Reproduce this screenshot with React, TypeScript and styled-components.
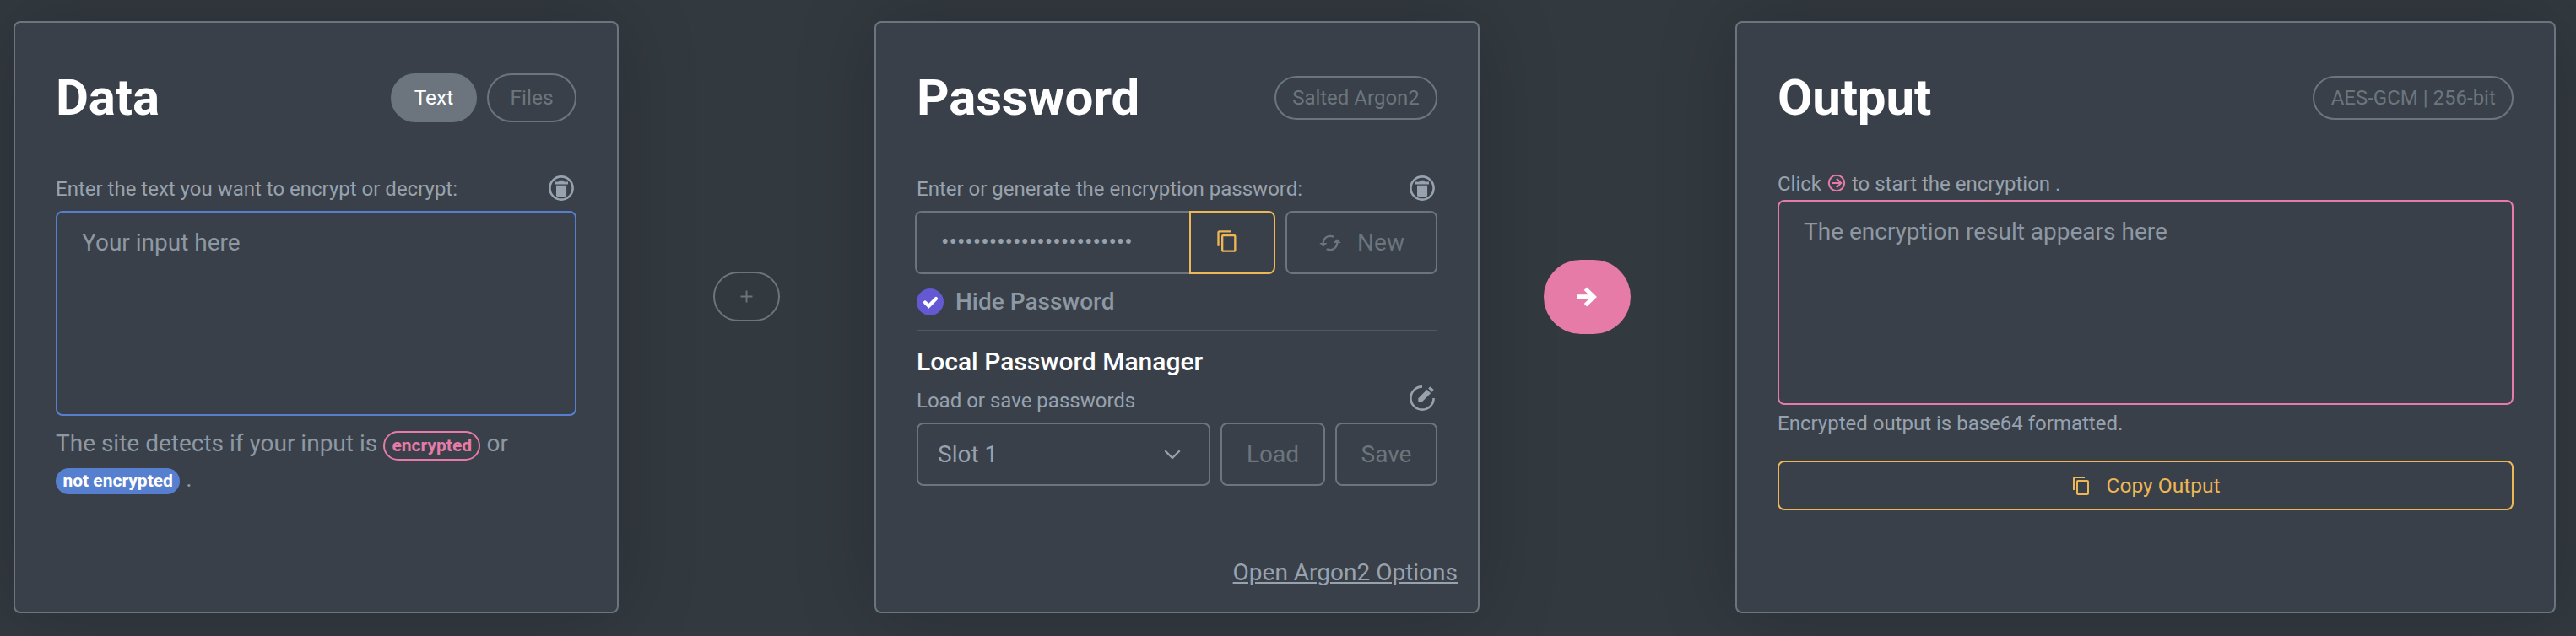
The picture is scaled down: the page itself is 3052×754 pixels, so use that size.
import React from "react";
import styled, { createGlobalStyle, css } from "styled-components";
import { MdCached, MdContentCopy } from "react-icons/md";

const color = {
  page: "#32393f",
  card: "#394049",
  border: "#6c757d",
  line: "#505860",
  label: "#98a2ae",
  text: "#8e98a3",
  blue: "#5680cf",
  pink: "#e67ba8",
  amber: "#edb755",
  purple: "#6558d3",
};

const GlobalStyle = createGlobalStyle`
  *, *::before, *::after { box-sizing: border-box; }
  body {
    margin: 0;
    background: ${color.page};
    color: ${color.text};
    font: 400 28px/42px Roboto, sans-serif;
  }
  svg { display: block; flex: none; }
`;

const Page = styled.main`
  display: flex;
  height: 754px;
  padding: 25px 24px 27px 16px;
  overflow: hidden;
`;

const Card = styled.section<{ $wide?: boolean }>`
  flex: ${(p) => (p.$wide ? "1 1 0" : "0 0 717px")};
  display: flex;
  flex-direction: column;
  padding: 53px 48px 0;
  border: 2px solid ${color.border};
  border-radius: 8px;
  background: ${color.card};
  box-shadow: 0 0 96px rgba(0, 0, 0, 0.175);
`;

const Connector = styled.div<{ $shift?: number }>`
  flex: 0 0 303px;
  display: flex;
  align-items: center;
  justify-content: center;
  padding-bottom: 49px;
  padding-right: ${(p) => p.$shift ?? 0}px;
`;

const PlusButton = styled.div`
  display: flex;
  align-items: center;
  justify-content: center;
  width: 79px;
  height: 59px;
  border: 2px solid ${color.border};
  border-radius: 30px;
`;

const ArrowButton = styled.div`
  display: flex;
  align-items: center;
  justify-content: center;
  width: 103px;
  height: 88px;
  padding-right: 2px;
  border-radius: 44px;
  background: ${color.pink};
`;

const Header = styled.header`
  display: flex;
  align-items: center;
  justify-content: space-between;
  height: 72px;
`;

const Title = styled.h1`
  margin: 0;
  color: #fff;
  font-size: 60px;
  font-weight: 700;
  line-height: 72px;
  letter-spacing: -0.15px;
`;

const Tabs = styled.nav`
  display: flex;
  gap: 12px;
`;

const Tab = styled.div<{ $active?: boolean }>`
  display: flex;
  align-items: center;
  justify-content: center;
  width: ${(p) => (p.$active ? 102 : 106)}px;
  height: 58px;
  border: 2px solid ${color.border};
  border-radius: 29px;
  font-size: 24.5px;
  line-height: 36px;
  color: ${(p) => (p.$active ? "#fff" : color.border)};
  background: ${(p) => (p.$active ? color.border : "transparent")};
`;

const Pill = styled.div`
  height: 52px;
  padding: 6px 19.2px;
  border: 2px solid ${color.border};
  border-radius: 26px;
  color: ${color.border};
  font-size: 24px;
  line-height: 36px;
`;

const LabelRow = styled.div<{ $top: number; $bottom?: number }>`
  display: flex;
  align-items: flex-start;
  justify-content: space-between;
  height: 36px;
  margin-top: ${(p) => p.$top}px;
  margin-bottom: ${(p) => p.$bottom ?? 8}px;
  padding-right: 3px;
  color: ${color.label};
  font-size: 24px;
  line-height: 36px;
`;

const RowIcon = styled.span<{ $drop?: number }>`
  margin-top: ${(p) => p.$drop ?? 0}px;
`;

const InlineIcon = styled.span`
  display: inline-block;
  width: 24px;
  height: 24px;
  vertical-align: -3px;
`;

const TextBox = styled.div<{ $tone: string }>`
  height: 243px;
  padding: 15px 29px;
  border: 2px solid ${(p) => p.$tone};
  border-radius: 8px;
`;

const Note = styled.p`
  margin: 12px 0 0;
`;

const SmallNote = styled.p`
  margin: 4px 0 26px;
  color: ${color.label};
  font-size: 24px;
  line-height: 36px;
`;

const Badge = styled.span<{ $outline?: boolean }>`
  display: inline-block;
  padding: 0.25em 0.4em;
  border-radius: 18px;
  font-size: 21px;
  font-weight: 700;
  line-height: 1;
  ${(p) =>
    p.$outline
      ? css`
          border: 2px solid ${color.pink};
          color: ${color.pink};
        `
      : css`
          background: ${color.blue};
          color: #fff;
        `}
`;

const ControlRow = styled.div<{ $outset?: boolean }>`
  display: flex;
  gap: 12px;
  height: 75px;
  margin-left: ${(p) => (p.$outset ? -2 : 0)}px;
`;

const InputGroup = styled.div`
  flex: 1;
  display: flex;
`;

const PasswordField = styled.div`
  flex: 1;
  padding: 14px 29px;
  border: 2px solid ${color.border};
  border-right: 0;
  border-radius: 8px 0 0 8px;
  color: ${color.label};
`;

const CopyAddon = styled.div`
  display: flex;
  align-items: center;
  justify-content: center;
  width: 102px;
  padding: 0 12px 3px 0;
  border: 2px solid ${color.amber};
  border-radius: 0 8px 8px 0;
  color: ${color.amber};
`;

const GhostButton = styled.div<{ $width: number }>`
  display: flex;
  align-items: center;
  justify-content: center;
  gap: 18px;
  width: ${(p) => p.$width}px;
  border: 2px solid ${color.border};
  border-radius: 8px;
  color: ${color.border};
`;

const Select = styled.div`
  flex: 1;
  display: flex;
  align-items: center;
  justify-content: space-between;
  padding: 0 33px 0 23px;
  border: 2px solid ${color.border};
  border-radius: 8px;
  color: ${color.label};
`;

const CheckRow = styled.div`
  display: flex;
  align-items: center;
  gap: 14px;
  height: 38px;
  margin-top: 14px;
  font-weight: 500;
`;

const Divider = styled.hr`
  width: 100%;
  height: 2px;
  margin: 14px 0 18px;
  border: 0;
  background: ${color.line};
`;

const SubTitle = styled.h2`
  margin: 0;
  color: #fff;
  font-size: 30px;
  font-weight: 500;
  line-height: 36px;
`;

const OptionsLink = styled.a`
  align-self: flex-end;
  margin: 82px -24px 0 0;
  color: ${color.label};
  text-decoration: underline;
`;

const CopyOutput = styled.div`
  display: flex;
  align-items: center;
  justify-content: center;
  gap: 18px;
  height: 59px;
  border: 2px solid ${color.amber};
  border-radius: 8px;
  color: ${color.amber};
  font-size: 24.5px;
  line-height: 36px;
`;

const TrashIcon = () => (
  <svg width="30" height="30" viewBox="0 0 30 30" fill={color.label}>
    <circle cx="15" cy="15" r="13.6" fill="none" stroke={color.label} strokeWidth="2.6" />
    <path d="M7 7.6h4.6l1.2-1.8h4.6l1.2 1.8H23v3H7z" />
    <path d="M9 11.7h12.1v11.6a1.6 1.6 0 0 1-1.6 1.6h-8.9A1.6 1.6 0 0 1 9 23.3z" />
  </svg>
);

const EditIcon = () => (
  <svg width="30" height="30" viewBox="0 0 30 30" fill={color.label}>
    <path d="M15 1.4A13.6 13.6 0 1 0 28.6 15" fill="none" stroke={color.label} strokeWidth="2.6" />
    <path d="M10.3 15.2 20.7 4.8l4.4 4.4-10.4 10.4h-4.4z" />
    <path d="M22.2 3.4l1.5-1.5a1.2 1.2 0 0 1 1.7 0l2.7 2.7a1.2 1.2 0 0 1 0 1.7l-1.5 1.5z" />
  </svg>
);

const CheckIcon = () => (
  <svg width="32" height="32" viewBox="0 0 32 32" fill="none">
    <circle cx="16" cy="16" r="16" fill={color.purple} />
    <path d="M10 16.5l4.4 4.3L23 12" stroke="#fff" strokeWidth="4.2" strokeLinecap="round" />
  </svg>
);

const PlusIcon = () => (
  <svg width="15" height="15" viewBox="0 0 15 15" fill="none">
    <path d="M7.5 .5v14M.5 7.5h14" stroke={color.border} strokeWidth="1.9" />
  </svg>
);

const ArrowIcon = () => (
  <svg width="24" height="24" viewBox="0 0 24 24" fill="none" stroke="#fff">
    <path d="M0 12h20" strokeWidth="5.6" />
    <path d="M10.4 2.2L20.5 12l-10.1 9.8" strokeWidth="4.8" />
  </svg>
);

const CircleArrowIcon = () => (
  <svg width="24" height="24" viewBox="0 0 24 24" fill="none" stroke={color.pink} strokeWidth="2">
    <circle cx="12" cy="12" r="9.2" />
    <path d="M6 12h11M12 6.8l5.2 5.2-5.2 5.2" />
  </svg>
);

const ChevronIcon = () => (
  <svg width="20" height="12" viewBox="0 0 20 12" fill="none">
    <path d="M2 2l8 8 8-8" stroke={color.label} strokeWidth="2.4" strokeLinecap="round" strokeLinejoin="round" />
  </svg>
);

export default function App() {
  return (
    <>
      <GlobalStyle />
      <Page>
        <Card>
          <Header>
            <Title>Data</Title>
            <Tabs>
              <Tab $active>Text</Tab>
              <Tab>Files</Tab>
            </Tabs>
          </Header>
          <LabelRow $top={54}>
            <span>Enter the text you want to encrypt or decrypt:</span>
            <RowIcon $drop={2}><TrashIcon /></RowIcon>
          </LabelRow>
          <TextBox $tone={color.blue}>Your input here</TextBox>
          <Note>
            The site detects if your input is <Badge $outline>encrypted</Badge> or{" "}
            <Badge>not encrypted</Badge> .
          </Note>
        </Card>

        <Connector>
          <PlusButton><PlusIcon /></PlusButton>
        </Connector>

        <Card>
          <Header>
            <Title>Password</Title>
            <Pill>Salted Argon2</Pill>
          </Header>
          <LabelRow $top={54}>
            <span>Enter or generate the encryption password:</span>
            <RowIcon $drop={2}><TrashIcon /></RowIcon>
          </LabelRow>
          <ControlRow $outset>
            <InputGroup>
              <PasswordField>{"•".repeat(24)}</PasswordField>
              <CopyAddon><MdContentCopy size={28} /></CopyAddon>
            </InputGroup>
            <GhostButton $width={180}>
              <MdCached size={28} />
              New
            </GhostButton>
          </ControlRow>
          <CheckRow>
            <CheckIcon />
            Hide Password
          </CheckRow>
          <Divider />
          <SubTitle>Local Password Manager</SubTitle>
          <LabelRow $top={10}>
            <span>Load or save passwords</span>
            <RowIcon><EditIcon /></RowIcon>
          </LabelRow>
          <ControlRow>
            <Select>
              Slot 1
              <ChevronIcon />
            </Select>
            <GhostButton $width={124}>Load</GhostButton>
            <GhostButton $width={121}>Save</GhostButton>
          </ControlRow>
          <OptionsLink>Open Argon2 Options</OptionsLink>
        </Card>

        <Connector $shift={48}>
          <ArrowButton><ArrowIcon /></ArrowButton>
        </Connector>

        <Card $wide>
          <Header>
            <Title>Output</Title>
            <Pill>AES-GCM | 256-bit</Pill>
          </Header>
          <LabelRow $top={48} $bottom={1}>
            <span>
              Click <InlineIcon><CircleArrowIcon /></InlineIcon> to start the encryption .
            </span>
          </LabelRow>
          <TextBox $tone={color.pink}>The encryption result appears here</TextBox>
          <SmallNote>Encrypted output is base64 formatted.</SmallNote>
          <CopyOutput>
            <MdContentCopy size={24} />
            Copy Output
          </CopyOutput>
        </Card>
      </Page>
    </>
  );
}
